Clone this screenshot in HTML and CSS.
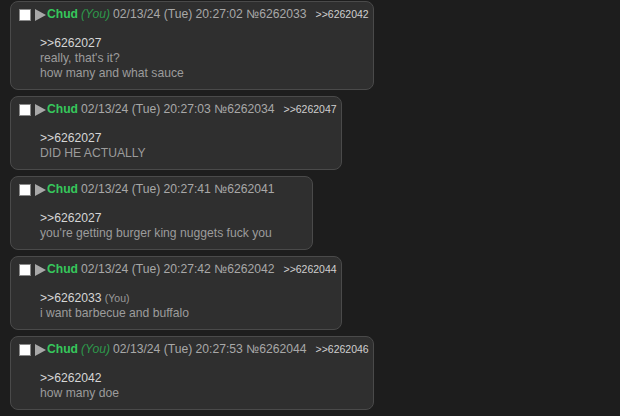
FILE: index.html
```html
<!DOCTYPE html>
<html lang="en">

<head>
    <meta charset="UTF-8">
    <title>Thread</title>
    <link rel="stylesheet" href="styles.css">
</head>

<body>
    <div class="thread">
        <div class="post">
            <div class="post-info">
                <span class="check"></span><span class="arrow"></span><span class="name">Chud</span> <span class="you">(You)</span> <span class="date">02/13/24 (Tue) 20:27:02 №6262033</span><span class="backlinks">&gt;&gt;6262042</span>
            </div>
            <div class="post-body">
                <span class="quote">&gt;&gt;6262027</span><br>
                really, that's it?<br>
                how many and what sauce
            </div>
        </div>

        <div class="post">
            <div class="post-info">
                <span class="check"></span><span class="arrow"></span><span class="name">Chud</span> <span class="date">02/13/24 (Tue) 20:27:03 №6262034</span><span class="backlinks">&gt;&gt;6262047</span>
            </div>
            <div class="post-body">
                <span class="quote">&gt;&gt;6262027</span><br>
                DID HE ACTUALLY
            </div>
        </div>

        <div class="post">
            <div class="post-info no-replies">
                <span class="check"></span><span class="arrow"></span><span class="name">Chud</span> <span class="date">02/13/24 (Tue) 20:27:41 №6262041</span>
            </div>
            <div class="post-body">
                <span class="quote">&gt;&gt;6262027</span><br>
                you're getting burger king nuggets fuck you
            </div>
        </div>

        <div class="post">
            <div class="post-info">
                <span class="check"></span><span class="arrow"></span><span class="name">Chud</span> <span class="date">02/13/24 (Tue) 20:27:42 №6262042</span><span class="backlinks">&gt;&gt;6262044</span>
            </div>
            <div class="post-body">
                <span class="quote">&gt;&gt;6262033</span> <span class="quote-you">(You)</span><br>
                i want barbecue and buffalo
            </div>
        </div>

        <div class="post">
            <div class="post-info">
                <span class="check"></span><span class="arrow"></span><span class="name">Chud</span> <span class="you">(You)</span> <span class="date">02/13/24 (Tue) 20:27:53 №6262044</span><span class="backlinks">&gt;&gt;6262046</span>
            </div>
            <div class="post-body">
                <span class="quote">&gt;&gt;6262042</span><br>
                how many doe
            </div>
        </div>
    </div>
</body>

</html>
```

FILE: styles.css
```css
body {
    margin: 0;
    background-color: #1d1d1d;
    font-family: "Liberation Sans", Arial, sans-serif;
    font-size: 12.15px;
    color: #a0a0a0;
}

.thread {
    padding: 1px 10px 0;
    display: flex;
    flex-direction: column;
    align-items: flex-start;
    gap: 6px;
}

.post {
    background-color: #2f2f2f;
    border: 1px solid #4a4a4a;
    border-radius: 8px;
    padding: 5px 4px 8px 8px;
}

.post-info {
    height: 15px;
    line-height: 15px;
    white-space: nowrap;
    display: flex;
    align-items: center;
    margin-bottom: 14px;
}

.post-info.no-replies {
    padding-right: 33px;
}

.check {
    display: inline-block;
    width: 10px;
    height: 10px;
    background-color: #fff;
    border: 1px solid #8a8a8a;
    margin-right: 4px;
}

.arrow {
    display: inline-block;
    width: 0;
    height: 0;
    border-top: 6px solid transparent;
    border-bottom: 6px solid transparent;
    border-left: 11px solid #a8a8a8;
    margin-right: 1px;
}

.name {
    color: #36c85c;
    font-weight: bold;
    margin-right: 3px;
}

.you {
    color: #2e9a4c;
    font-style: italic;
    margin-right: 3px;
}

.date {
    color: #a8a8a8;
}

.backlinks {
    color: #cfcfcf;
    font-size: 10.5px;
    margin-left: 9px;
}

.post-body {
    padding-left: 21px;
    line-height: 15px;
    color: #9c9c9c;
}

.quote {
    color: #d6d6d6;
}

.quote-you {
    color: #9a9a9a;
    font-size: 10.5px;
}
```
